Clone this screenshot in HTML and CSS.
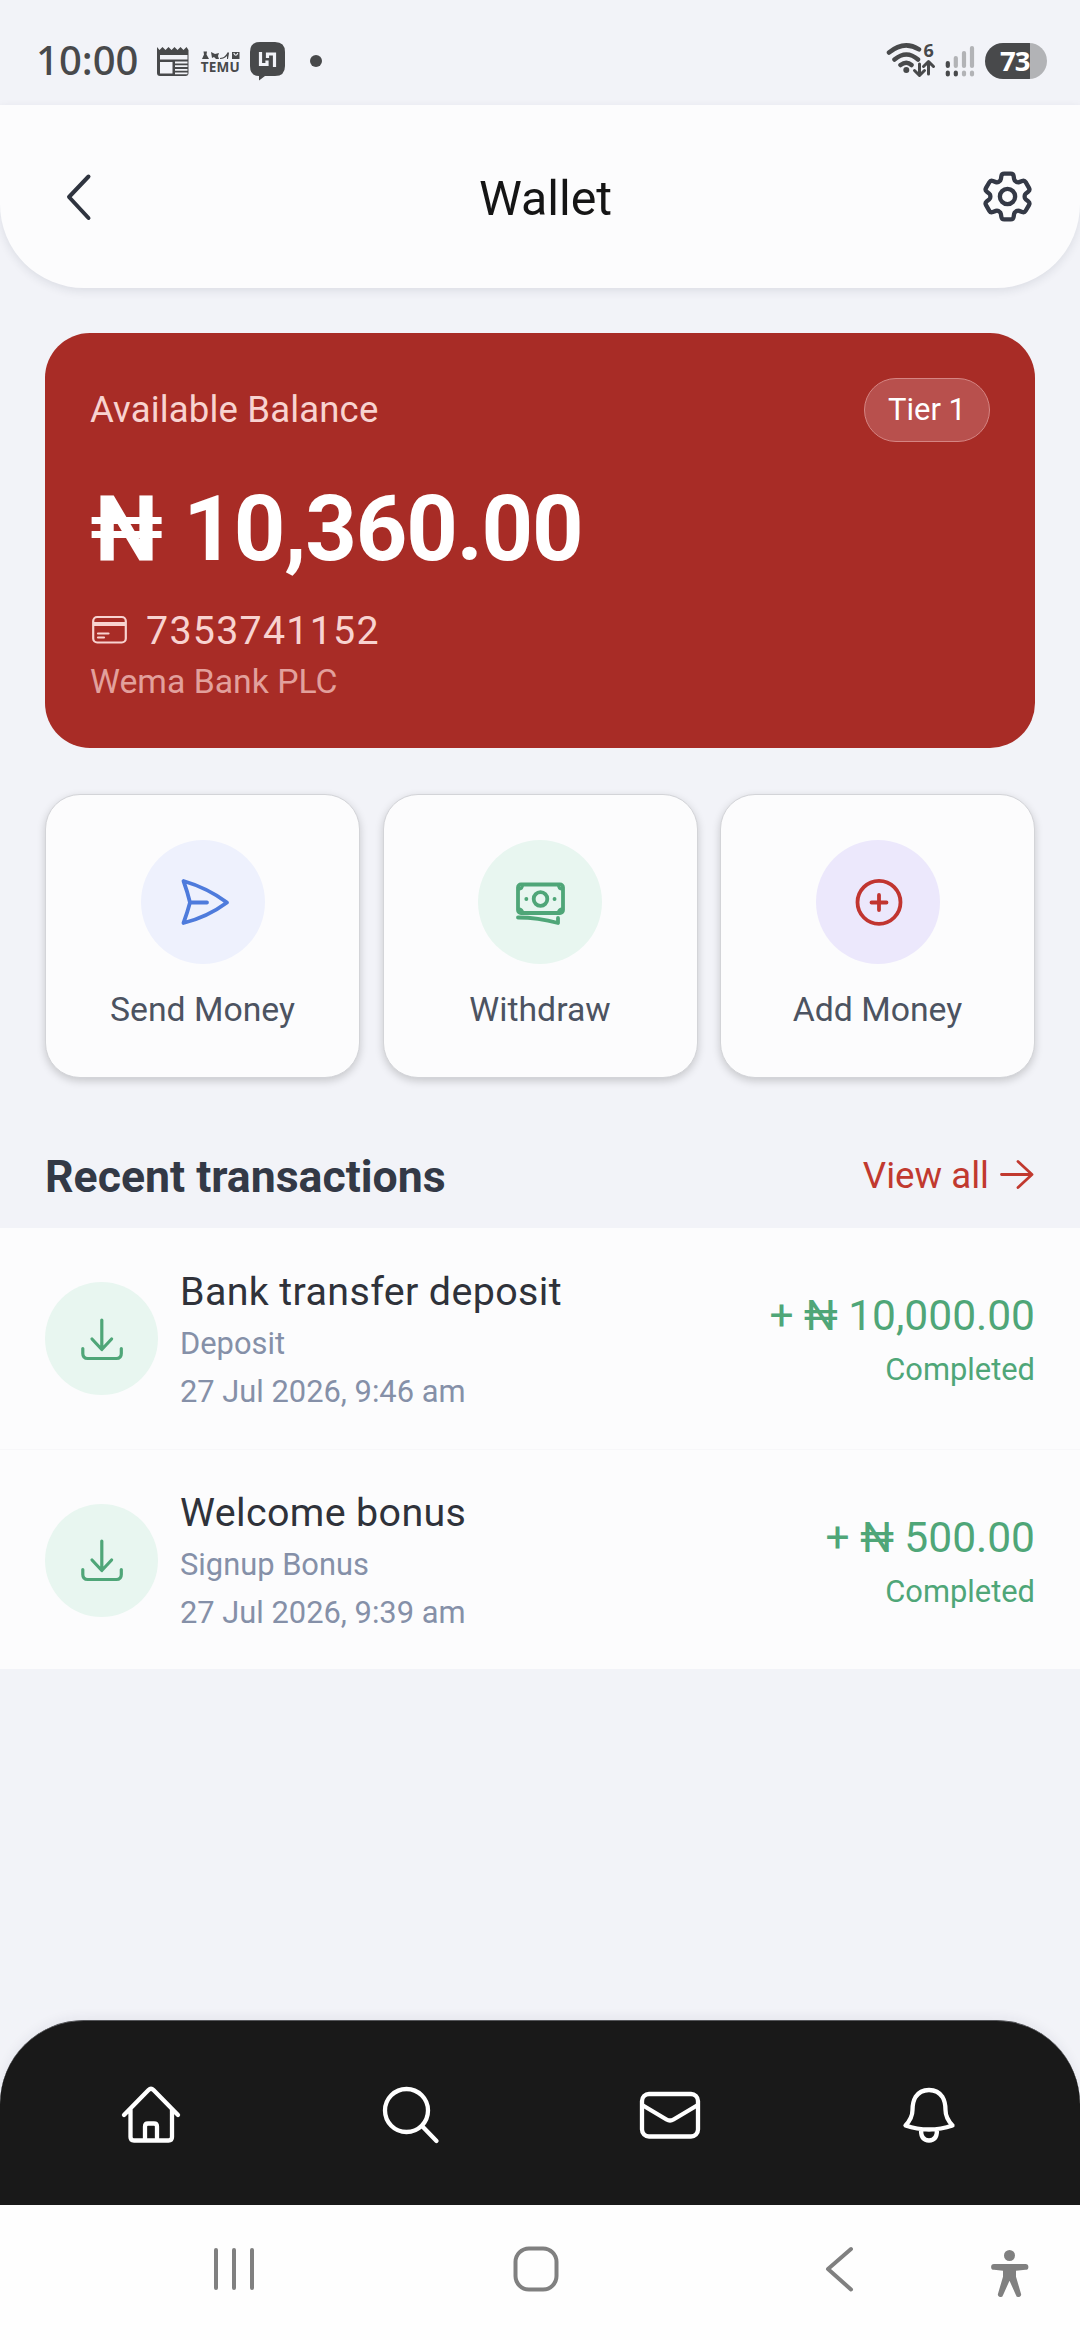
FILE: index.html
```html
<!DOCTYPE html>
<html lang="en">
<head>
<meta charset="utf-8">
<title>Wallet</title>
<link rel="stylesheet" href="styles.css">
</head>
<body>
<div class="phone">
  <div class="status-bar">
    <span class="clock">10:00</span>
    <svg class="status-icons" width="140" height="50" viewBox="150 36 140 50">
      <path class="ink" fill-rule="evenodd" d="M157 47l2.500 3 3-3 3 3 3-3 3 3 3-3 3 3 3-3 3 3 3-3 2 3V73a3 3 0 0 1-3 3H160a3 3 0 0 1-3-3zM160 55h27.500v4.500h-27.500zM160 62h12.500v11.500h-12.500z"/>
      <path class="paper-lines" d="M175 62.500h12.500M175 66.200h12.500M175 69.900h12.500M175 73.300h12.500"/>
      <path class="ink" d="M203.500 51.500h3.500l-.500 3 2.500 4.500h-7l2-4.500zM211 52l4 2 4-1-1 3 1 3h-3l-2-2-2 1zM220 58c4 0 6-3 8-6l1 1-1 6h-1v-3c-2 2-4 3-7 3zM232 52h7.500v7h-7.500z"/>
      <path class="knock" d="M234 53.500q1.800 3.500 3.600 0"/>
      <text class="brand" x="200.700" y="71.700" textLength="39">TEMU</text>
      <path class="ink" d="M260 42h15q10 0 10 10v14q0 10-10 10h-10l-6 4.500v-4.500q-9 0-9-10v-14q0-10 10-10z"/>
      <path class="l7" d="M260.500 52v12.500h6.500v-4M267.500 58v-4h7v13"/>
    </svg>
    <span class="dot"></span>
    <svg class="network" width="92" height="44" viewBox="885 40 92 44">
      <g class="wifi">
        <path d="M889 53.500q15-12.500 30-3.200M894.500 60.500q12-10 23.500 0M900.500 66q6-4.500 11 0"/>
        <path class="arrows" d="M919.500 65v11M914.500 71.500l5 5 5-5M928.500 75V63M923.500 67.500l5-5 5 5"/>
      </g>
      <circle class="ink" cx="906.300" cy="71" r="3"/>
      <text class="gen" x="923.500" y="58.300">6</text>
      <path class="sig-on" d="M947.800 64v3M947.800 73.500v2M955.800 73.500v2"/>
      <path class="sig-off" d="M955.800 59v8M964 54v13M972 49v18M964 73.500v2M972 73.500v2"/>
    </svg>
    <span class="battery">73</span>
  </div>

  <header class="app-header">
    <svg width="30" height="52" viewBox="64 170 30 52"><path class="back" d="M88.500 175.500L69 196l19.500 21"/></svg>
    <h1 class="page-title">Wallet</h1>
    <svg class="gear" width="61" height="61" viewBox="0 0 24 24"><path d="M9.594 3.940c.09-.542.56-.94 1.110-.94h2.593c.55 0 1.020.398 1.110.94l.213 1.281c.063.374.313.686.645.87.074.04.147.083.22.127.325.196.72.257 1.075.124l1.217-.456a1.125 1.125 0 0 1 1.370.49l1.296 2.247a1.125 1.125 0 0 1-.26 1.431l-1.003.827c-.293.241-.438.613-.43.992a7.723 7.723 0 0 1 0 .255c-.008.378.137.75.43.991l1.004.827c.424.35.534.955.26 1.430l-1.298 2.247a1.125 1.125 0 0 1-1.369.491l-1.217-.456c-.355-.133-.75-.072-1.076.124a6.470 6.470 0 0 1-.22.128c-.331.183-.581.495-.644.869l-.213 1.281c-.09.543-.56.94-1.110.94h-2.594c-.55 0-1.019-.398-1.110-.94l-.213-1.281c-.062-.374-.312-.686-.644-.87a6.520 6.520 0 0 1-.22-.127c-.325-.196-.72-.257-1.076-.124l-1.217.456a1.125 1.125 0 0 1-1.369-.49l-1.297-2.247a1.125 1.125 0 0 1 .26-1.431l1.004-.827c.292-.24.437-.613.43-.991a6.932 6.932 0 0 1 0-.255c.007-.38-.138-.751-.43-.992l-1.004-.827a1.125 1.125 0 0 1-.26-1.430l1.297-2.247a1.125 1.125 0 0 1 1.370-.491l1.216.456c.356.133.751.072 1.076-.124.072-.044.146-.086.22-.128.332-.183.582-.495.644-.869l.214-1.280Z"/><circle cx="12" cy="12" r="3"/></svg>
  </header>

  <main class="content">
    <section class="balance-card">
      <div class="balance-top">
        <span class="balance-label">Available Balance</span>
        <span class="tier">Tier 1</span>
      </div>
      <div class="balance">₦ 10,360.00</div>
      <div class="account">
        <svg width="38" height="32" viewBox="90 615 38 32"><rect x="93.200" y="618" width="32.600" height="25.500" rx="4"/><path class="band" d="M93 625h33"/><path d="M98 634.500h10.500M98 638.500h6"/></svg>
        <span>7353741152</span>
      </div>
      <div class="bank">Wema Bank PLC</div>
    </section>

    <section class="actions">
      <button class="action">
        <span class="disc blue"><svg width="60" height="60" viewBox="172.500 872 60 60"><path d="M183 881q24 7 43.500 21.500Q207 917 183 923q4-11 6.500-20.500Q187 892 183 881zM189.500 902.500h17"/></svg></span>
        <span class="action-label">Send Money</span>
      </button>
      <button class="action">
        <span class="disc green"><svg width="60" height="60" viewBox="510.500 872 60 60"><rect x="518.500" y="884.500" width="45" height="28.500" rx="3"/><circle cx="541" cy="899" r="6.800"/><path class="corners" d="M519 889q4 0 4-4M563 889q-4 0-4-4M519 909q4 0 4 4M563 909q-4 0-4 4"/><path d="M526.800 899h.1M555 899h.1M518.500 917.500q20 0 40 5.500v-5"/></svg></span>
        <span class="action-label">Withdraw</span>
      </button>
      <button class="action">
        <span class="disc violet"><svg width="60" height="60" viewBox="847.500 872 60 60"><circle cx="878.500" cy="902.300" r="21.500"/><path d="M871 902.500h15M878.500 895v15"/></svg></span>
        <span class="action-label">Add Money</span>
      </button>
    </section>

    <div class="section-head">
      <h2 class="section-title">Recent transactions</h2>
      <a class="view-all">View all <svg width="36" height="32" viewBox="998 1159 36 32"><path d="M1000.500 1174.500h30M1017 1161.500l14 13-14 13"/></svg></a>
    </div>
  </main>

  <section class="transactions">
    <article class="txn">
      <span class="txn-disc"><svg width="50" height="50" viewBox="76.500 1313.500 50 50"><path d="M101.300 1319.500v29M91.500 1338.500l9.800 10.500 9.800-10.500M82.300 1348v5q0 5 5 5h28.500q5 0 5-5v-5"/></svg></span>
      <div class="txn-text">
        <span class="txn-title">Bank transfer deposit</span>
        <span class="txn-meta">Deposit</span>
        <span class="txn-meta">27 Jul 2026, 9:46 am</span>
      </div>
      <div class="txn-value">
        <span class="txn-amount">+ ₦ 10,000.00</span>
        <span class="txn-state">Completed</span>
      </div>
    </article>
    <article class="txn">
      <span class="txn-disc"><svg width="50" height="50" viewBox="76.500 1313.500 50 50"><path d="M101.300 1319.500v29M91.500 1338.500l9.800 10.500 9.800-10.500M82.300 1348v5q0 5 5 5h28.500q5 0 5-5v-5"/></svg></span>
      <div class="txn-text">
        <span class="txn-title">Welcome bonus</span>
        <span class="txn-meta">Signup Bonus</span>
        <span class="txn-meta">27 Jul 2026, 9:39 am</span>
      </div>
      <div class="txn-value">
        <span class="txn-amount">+ ₦ 500.00</span>
        <span class="txn-state">Completed</span>
      </div>
    </article>
  </section>

  <nav class="tab-bar">
    <svg width="66" height="66" viewBox="117.500 2082 66 66"><path d="M123.500 2115l24.500-25q2.500-2.500 5 0l24.500 25M130 2109v28q0 3.500 3.500 3.500h34.500q3.500 0 3.500-3.500v-28M144.500 2140v-13.500q0-3 3-3h6q3 0 3 3v13.500"/></svg>
    <svg width="66" height="66" viewBox="377 2082 66 66"><circle cx="406.500" cy="2110.500" r="21.500"/><path d="M422.500 2126.500l14 14.500"/></svg>
    <svg width="66" height="66" viewBox="637 2082 66 66"><rect x="642" y="2094" width="56" height="42.500" rx="7"/><path d="M643 2105.500l23.500 14q3.500 2 7 0l23.500-14"/></svg>
    <svg width="66" height="66" viewBox="896.500 2082 66 66"><path d="M929.500 2090q-9 0-13.500 7-3 5-3 13 0 8-7 15.500 11.500 4 23.500 4t23.500-4q-7-7.500-7-15.500 0-8-3-13-4.500-7-13.500-7zM921.500 2130q0 10.500 8 10.500t8-10.500"/></svg>
  </nav>

  <div class="system-nav">
    <svg width="1080" height="135" viewBox="0 2205 1080 135"><g class="sys-line"><path d="M216 2250v38M234 2250v38M252 2250v38"/><rect x="515.500" y="2248.500" width="41" height="41" rx="13.500"/><path d="M851 2249l-23 20 23 20.500"/></g><g class="sys-fill"><circle cx="1009.500" cy="2255.500" r="5.500"/><path d="M994 2264h31.500a2.800 2.800 0 0 1 0 5.800l-9.500.900v6l5 17a2.600 2.600 0 0 1-5 1.500l-6.500-14.500-6.500 14.500a2.600 2.600 0 0 1-5-1.500l5-17v-6l-9-.900a2.800 2.800 0 0 1 0-5.800z"/></g></svg>
  </div>
</div>
</body>
</html>
```

FILE: styles.css
```css
* { box-sizing: border-box; }
body { margin: 0; background: #f2f3f8; font-family: Roboto, sans-serif; }
.phone { width: 1080px; height: 2340px; display: flex; flex-direction: column; overflow: hidden; }
svg { display: block; flex: none; fill: none; stroke-linecap: round; stroke-linejoin: round; }
h1, h2 { margin: 0; font-weight: 400; }

/* status bar */
.status-bar { height: 105px; padding: 17px 33px 0 36px; display: flex; align-items: center; color: #48494b; }
.clock { width: 114px; margin-top: -2px; font: 500 40px/50px "Noto Sans", "Open Sans", sans-serif; }
.ink { fill: #48494b; }
.paper-lines { stroke: #f2f3f8; stroke-width: 1.800; stroke-linecap: butt; }
.knock { stroke: #f2f3f8; stroke-width: 1.200; }
.brand { fill: #48494b; font: 700 13.500px "Noto Sans", sans-serif; }
.l7 { stroke: #f2f3f8; stroke-width: 3.200; stroke-linecap: butt; stroke-linejoin: miter; }
.dot { width: 12px; height: 12px; margin-left: 20px; border-radius: 50%; background: #48494b; }
.network { margin-left: auto; margin-right: 8px; }
.wifi { stroke: #48494b; stroke-width: 4.500; }
.wifi .arrows { stroke-width: 3; }
.gen { fill: #48494b; font: 700 18px "Noto Sans", sans-serif; }
.sig-on { stroke: #48494b; stroke-width: 4.200; }
.sig-off { stroke: #b2b3b6; stroke-width: 4.200; }
.battery { width: 62px; height: 36px; padding-left: 15px; border-radius: 18px; background: linear-gradient(90deg, #48494b 45px, #b2b3b6 45px); color: #fff; font: 700 27.500px/36px "Open Sans", sans-serif; letter-spacing: -1px; }

/* header */
.app-header { position: relative; height: 183px; padding: 0 42px 0 64px; display: flex; align-items: center; justify-content: space-between; background: #fcfcfd; border-radius: 0 0 84px 84px; box-shadow: 0 3px 10px rgba(30, 35, 60, .10); }
.back { stroke: #2f343f; stroke-width: 4; }
.page-title { margin-left: 20px; font-size: 48.300px; line-height: 60px; padding-top: 4px; color: #151515; }
.gear { stroke: #343946; stroke-width: 1.700; }

/* balance */
.content { height: 940px; padding: 45px 45px 0; }
.balance-card { height: 415px; padding: 45px; border-radius: 45px; background: #a82c26; color: #fff; }
.balance-top { height: 64px; display: flex; align-items: center; justify-content: space-between; }
.balance-label { margin-top: -2px; font-size: 36.560px; letter-spacing: .15px; color: #f8d3d0; }
.tier { width: 126px; height: 64px; border: 1px solid #d58583; border-radius: 32px; background: #b8504d; font-size: 30.940px; line-height: 61px; text-align: center; }
.balance { margin-top: 35px; font-size: 90px; line-height: 106px; font-weight: 700; letter-spacing: -1.150px; }
.account { margin-top: 24px; height: 46px; display: flex; align-items: center; gap: 18px; font-size: 39.400px; color: #f8d3d0; letter-spacing: 1.250px; }
.account svg { stroke: #f8d3d0; stroke-width: 2.200; }
.account .band { stroke-width: 4; stroke-linecap: butt; }
.bank { margin-top: 9px; font-size: 33.750px; line-height: 40px; color: #e2a09c; }

/* actions */
.actions { margin-top: 46px; display: grid; grid-template-columns: repeat(3, 1fr); gap: 22.500px; }
.action { height: 284px; padding: 45px 0 0; display: flex; flex-direction: column; align-items: center; gap: 26px; border: 1px solid #d3d4d8; border-radius: 35px; background: #fcfcfd; box-shadow: 0 3px 8px rgba(0, 0, 0, .18); font: inherit; }
.disc { width: 124px; height: 124px; border-radius: 50%; display: grid; place-items: center; }
.disc svg { stroke-width: 3.800; }
.blue { background: #eef1fd; stroke: #4e7bdc; }
.green { background: #e8f6f0; stroke: #4fa678; }
.violet { background: #ece8fc; stroke: #c13530; }
.disc .corners { stroke-width: 3; }
.action-label { font-size: 33.750px; line-height: 40px; color: #4c5361; }

/* transactions */
.section-head { height: 150px; padding-top: 44px; display: flex; align-items: center; justify-content: space-between; }
.section-title { padding-top: 3px; font-size: 44.600px; font-weight: 700; color: #333946; }
.view-all { display: flex; align-items: center; gap: 10px; font-size: 36.700px; color: #c1392f; }
.view-all svg { stroke: #c1392f; stroke-width: 2.800; }
.txn { height: 220.500px; padding: 0 45px; display: flex; background: #fcfcfd; }
.txn + .txn { border-top: 1px solid #f7f7f9; }
.txn-disc { width: 113px; height: 113px; margin-top: 54px; border-radius: 50%; background: #e8f6f0; display: grid; place-items: center; }
.txn-disc svg { stroke: #4fa678; stroke-width: 3.200; }
.txn-text { margin: 35.500px 0 0 22px; display: flex; flex-direction: column; }
.txn-title { font-size: 39.400px; line-height: 56px; letter-spacing: .37px; color: #2f323a; }
.txn-meta { font-size: 30.850px; line-height: 48px; color: #8590a8; }
.txn-value { margin: 61px 0 0 auto; display: flex; flex-direction: column; align-items: flex-end; color: #4fa678; }
.txn-amount { font-size: 42.500px; line-height: 54px; }
.txn-state { font-size: 30.850px; line-height: 54px; }

/* bottom bars */
.tab-bar { height: 185px; margin-top: auto; padding: 3px 117.500px 0; display: flex; align-items: center; justify-content: space-between; border-top: 1px solid #55565a; border-radius: 84px 84px 0 0; background: #191919; box-shadow: 0 -3px 12px rgba(30, 35, 60, .06); }
.tab-bar svg { stroke: #fff; stroke-width: 4.300; }
.system-nav { height: 135px; background: #fefefe; }
.sys-line { stroke: #808080; stroke-width: 4; }
.sys-fill { fill: #808080; }
```
